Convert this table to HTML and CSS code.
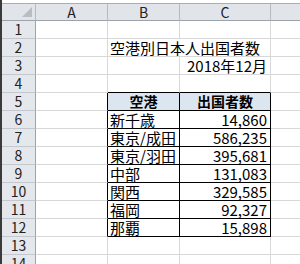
FILE: index.html
```html
<!DOCTYPE html>
<html lang="ja">
<head>
<meta charset="utf-8">
<link rel="stylesheet" href="styles.css">
</head>
<body>
<div class="sheet">
  <div class="corner"><span class="tri"></span></div>
  <div class="ch">A</div><div class="ch">B</div><div class="ch">C</div><div class="ch last"></div>

  <div class="rh">1</div><div class="c"></div><div class="c"></div><div class="c"></div><div class="c"></div>
  <div class="rh">2</div><div class="c"></div><div class="c span2 txt">空港別日本人出国者数</div><div class="c"></div>
  <div class="rh">3</div><div class="c"></div><div class="c"></div><div class="c txt right">2018年12月</div><div class="c"></div>
  <div class="rh">4</div><div class="c"></div><div class="c bb"></div><div class="c bb"></div><div class="c"></div>
  <div class="rh">5</div><div class="c bl"></div><div class="t th">空港</div><div class="t th">出国者数</div><div class="c"></div>
  <div class="rh">6</div><div class="c bl"></div><div class="t txt">新千歳</div><div class="t txt right">14,860</div><div class="c"></div>
  <div class="rh">7</div><div class="c bl"></div><div class="t txt">東京/成田</div><div class="t txt right">586,235</div><div class="c"></div>
  <div class="rh">8</div><div class="c bl"></div><div class="t txt">東京/羽田</div><div class="t txt right">395,681</div><div class="c"></div>
  <div class="rh">9</div><div class="c bl"></div><div class="t txt">中部</div><div class="t txt right">131,083</div><div class="c"></div>
  <div class="rh">10</div><div class="c bl"></div><div class="t txt">関西</div><div class="t txt right">329,585</div><div class="c"></div>
  <div class="rh">11</div><div class="c bl"></div><div class="t txt">福岡</div><div class="t txt right">92,327</div><div class="c"></div>
  <div class="rh">12</div><div class="c bl"></div><div class="t txt">那覇</div><div class="t txt right">15,898</div><div class="c"></div>
  <div class="rh">13</div><div class="c"></div><div class="c"></div><div class="c"></div><div class="c"></div>
  <div class="rh">14</div><div class="c"></div><div class="c"></div><div class="c"></div><div class="c"></div>
</div>
</body>
</html>
```
FILE: styles.css
```css
html, body {
  margin: 0;
  padding: 0;
  background: #ffffff;
  overflow: hidden;
}
body {
  width: 300px;
  height: 264px;
  font-family: "Noto Sans CJK JP", "DejaVu Sans", sans-serif;
  font-size: 15px;
  color: #000;
}
.sheet {
  display: grid;
  grid-template-columns: 34px 72px 72px 91px 30px;
  grid-auto-rows: 18px;
  border-left: 2px solid #3a3a3a;
  padding-top: 3px;
  height: 261px;
  box-sizing: content-box;
  overflow: hidden;
}
.corner {
  position: relative;
  background: #e1e4e9;
  border-top: 1px solid #a9aeb6;
  border-right: 1px solid #b5bac2;
  border-bottom: 1px solid #9da3ab;
  box-sizing: border-box;
}
.tri {
  position: absolute;
  right: 3px;
  bottom: 3px;
  width: 0;
  height: 0;
  border-left: 10px solid transparent;
  border-bottom: 10px solid #b8bcc3;
}
.ch {
  background: #e1e4e9;
  border-top: 1px solid #a9aeb6;
  border-right: 1px solid #b5bac2;
  border-bottom: 1px solid #9da3ab;
  box-sizing: border-box;
  text-align: center;
  line-height: 16px;
  font-size: 14px;
  color: #222;
}
.ch.last {
  border-right: none;
}
.rh {
  background: #e4e7ec;
  border-right: 1px solid #9da3ab;
  border-bottom: 1px solid #c3c8cf;
  box-sizing: border-box;
  text-align: center;
  line-height: 17px;
  font-size: 14px;
  color: #222;
}
.c, .t {
  box-sizing: border-box;
  border-right: 1px solid #d8d8d8;
  border-bottom: 1px solid #d8d8d8;
  line-height: 17px;
  white-space: nowrap;
  overflow: visible;
}
.t {
  border-right-color: #000;
  border-bottom-color: #000;
}
.bl {
  border-right-color: #000;
}
.bb {
  border-bottom-color: #000;
}
.span2 {
  grid-column: span 2;
}
.txt {
  padding: 0 3px 0 2px;
}
.right {
  text-align: right;
}
.th {
  background: #dce6f1;
  font-weight: 700;
  text-align: center;
  font-size: 14px;
}
```
